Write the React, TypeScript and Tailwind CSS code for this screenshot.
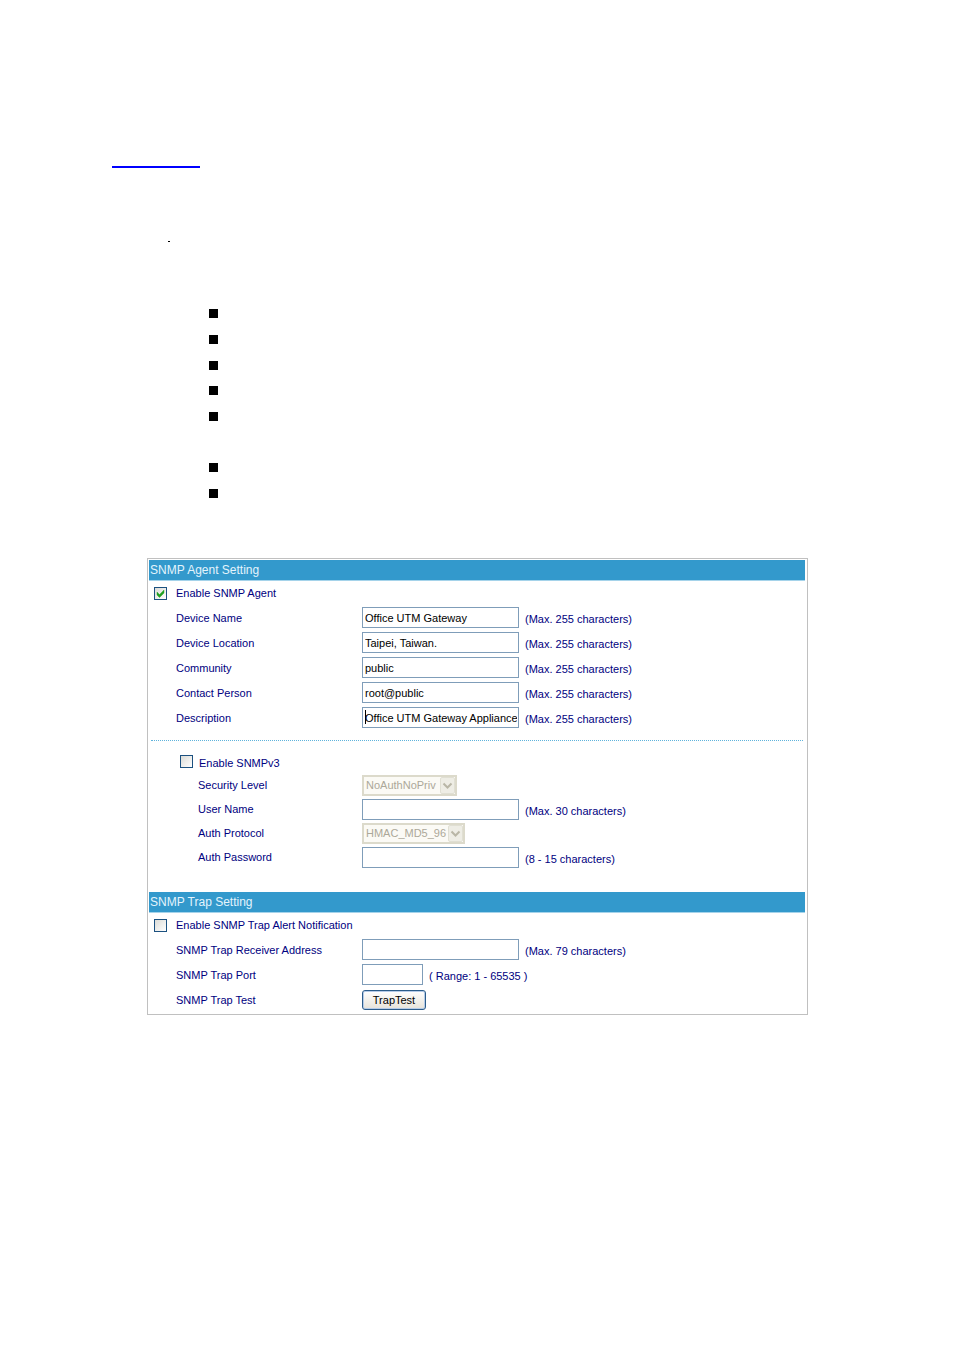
import React from 'react';

const agentFields = [
  { id: "device-name", label: "Device Name", value: "Office UTM Gateway" },
  { id: "device-location", label: "Device Location", value: "Taipei, Taiwan." },
  { id: "community", label: "Community", value: "public" },
  { id: "contact-person", label: "Contact Person", value: "root@public" },
  { id: "description", label: "Description", value: "Office UTM Gateway Appliance", caret: true },
];

const bulletHeights = ["h-[26px]", "h-[26px]", "h-[25px]", "h-[26px]", "h-[51px]", "h-[26px]", "h-[26px]"];

const inputClass = "block h-[21px] border border-[#7f9db9] bg-white pl-[2px] pr-px text-black outline-none";

const SectionTitle = ({ children }: { children: React.ReactNode }) => (
  <h2 className="h-[21px] border-b border-[#a5d3ea] bg-[#3399cc] pl-px text-[12px] leading-[20px] text-[#e4f4fc]">
    {children}
  </h2>
);

const CheckBox = ({ id, checked = false }: { id: string; checked?: boolean }) => (
  <span className="relative block h-[13px] w-[13px] shrink-0">
    <input
      id={id}
      type="checkbox"
      defaultChecked={checked}
      className="peer block h-[13px] w-[13px] appearance-none border border-[#1c5180] bg-linear-to-br from-[#dcdcd7] to-white"
    />
    <svg
      viewBox="0 0 13 13"
      className="pointer-events-none absolute inset-0 hidden h-[13px] w-[13px] peer-checked:block"
    >
      <path d="M3 5v3l2.5 2.5L10 6V3L5.500 7.500z" fill="#21a121" stroke="#21a121" strokeWidth="0.4" />
    </svg>
  </span>
);

const Row = ({ id, label, indent = false, tall = false, children }: {
  id: string;
  label: string;
  indent?: boolean;
  tall?: boolean;
  children: React.ReactNode;
}) => (
  <div className={`flex items-center ${tall ? "h-[25px]" : "h-6"}`}>
    <label
      htmlFor={id}
      className={`w-[213px] shrink-0 ${indent ? "pl-[49px]" : "pl-[27px]"}`}
    >
      {label}
    </label>
    {children}
  </div>
);

const Hint = ({ children }: { children: React.ReactNode }) => (
  <span className="pt-[3px] pl-[6px]">{children}</span>
);

const DisabledSelect = ({ id, value, className }: { id: string; value: string; className: string }) => (
  <span className={`relative block ${className}`}>
    <select
      id={id}
      disabled
      className="block h-[21px] w-full appearance-none border-2 border-[#dcdacb] bg-[#fbfaf5] pl-[2px] text-[#aca899] opacity-100"
    >
      <option>{value}</option>
    </select>
    <svg viewBox="0 0 16 17" className="pointer-events-none absolute top-[2px] right-[2px] h-[17px] w-4">
      <rect x="1.500" y="0.5" width="14" height="16" rx="1.500" fill="#eeede5" stroke="#e0dfd3" />
      <path d="M4.500 6.500l4 4 4-4" fill="none" stroke="#b9b6a6" strokeWidth="2" />
    </svg>
  </span>
);

const App = () => {
  return (
    <main className="min-h-screen bg-white pt-[166px] pb-20 font-['Liberation_Sans',Arial,sans-serif] text-[11px] leading-[14px] text-[#000080]">
      <div className="ml-28 h-[2px] w-[88px] bg-[#0000ff]"></div>
      <div className="mt-[73px] ml-[168px] h-px w-[2px] bg-black"></div>

      <ul className="mt-[67px] ml-[209px]">
        {bulletHeights.map((height, i) => (
          <li key={i} className={height}>
            <span className="block h-[9px] w-[9px] bg-black"></span>
          </li>
        ))}
      </ul>

      <form
        onSubmit={(e) => e.preventDefault()}
        className="mt-[43px] mr-[146px] ml-[147px] border border-[#c0c0c0] p-px pr-[2px] pb-[2px]"
      >
        <SectionTitle>SNMP Agent Setting</SectionTitle>
        <div className="flex h-6 items-center gap-[9px] pl-[5px]">
          <CheckBox id="enable-agent" checked />
          <label htmlFor="enable-agent">Enable SNMP Agent</label>
        </div>
        {agentFields.map((field) => (
          <Row key={field.id} id={field.id} label={field.label} tall>
            <span className="relative">
              <input id={field.id} type="text" defaultValue={field.value} className={`${inputClass} w-[157px]`} />
              {field.caret && <span className="absolute top-[3px] left-[3px] h-[14px] w-px bg-black"></span>}
            </span>
            <Hint>(Max. 255 characters)</Hint>
          </Row>
        ))}

        <hr className="mx-[2px] mt-[10px] mb-2 border-0 border-t border-dotted border-[#5fb3dc]" />

        <div className="flex h-6 items-center gap-[6px] pl-[31px]">
          <CheckBox id="enable-v3" />
          <label htmlFor="enable-v3" className="pt-[3px]">Enable SNMPv3</label>
        </div>
        <Row id="security-level" label="Security Level" indent>
          <DisabledSelect id="security-level" value="NoAuthNoPriv" className="w-[95px]" />
        </Row>
        <Row id="user-name" label="User Name" indent>
          <input id="user-name" type="text" className={`${inputClass} w-[157px]`} />
          <Hint>(Max. 30 characters)</Hint>
        </Row>
        <Row id="auth-protocol" label="Auth Protocol" indent>
          <DisabledSelect id="auth-protocol" value="HMAC_MD5_96" className="w-[103px]" />
        </Row>
        <Row id="auth-password" label="Auth Password" indent>
          <input id="auth-password" type="password" className={`${inputClass} w-[157px]`} />
          <Hint>(8 - 15 characters)</Hint>
        </Row>

        <div className="mt-[23px]">
          <SectionTitle>SNMP Trap Setting</SectionTitle>
        </div>
        <div className="flex h-6 items-center gap-[9px] pl-[5px]">
          <CheckBox id="enable-trap" />
          <label htmlFor="enable-trap">Enable SNMP Trap Alert Notification</label>
        </div>
        <Row id="trap-address" label="SNMP Trap Receiver Address" tall>
          <input id="trap-address" type="text" className={`${inputClass} w-[157px]`} />
          <Hint>(Max. 79 characters)</Hint>
        </Row>
        <Row id="trap-port" label="SNMP Trap Port" tall>
          <input id="trap-port" type="text" className={`${inputClass} w-[61px]`} />
          <Hint>( Range: 1 - 65535 )</Hint>
        </Row>
        <Row id="trap-test" label="SNMP Trap Test" tall>
          <button
            id="trap-test"
            type="button"
            className="h-5 w-16 rounded-[3px] border border-[#2b5c8a] bg-linear-to-b from-white to-[#e6e3da] text-black shadow-[inset_0_0_0_1px_#b5cbe8]"
          >
            TrapTest
          </button>
        </Row>
      </form>
    </main>
  );
};

export default App;
